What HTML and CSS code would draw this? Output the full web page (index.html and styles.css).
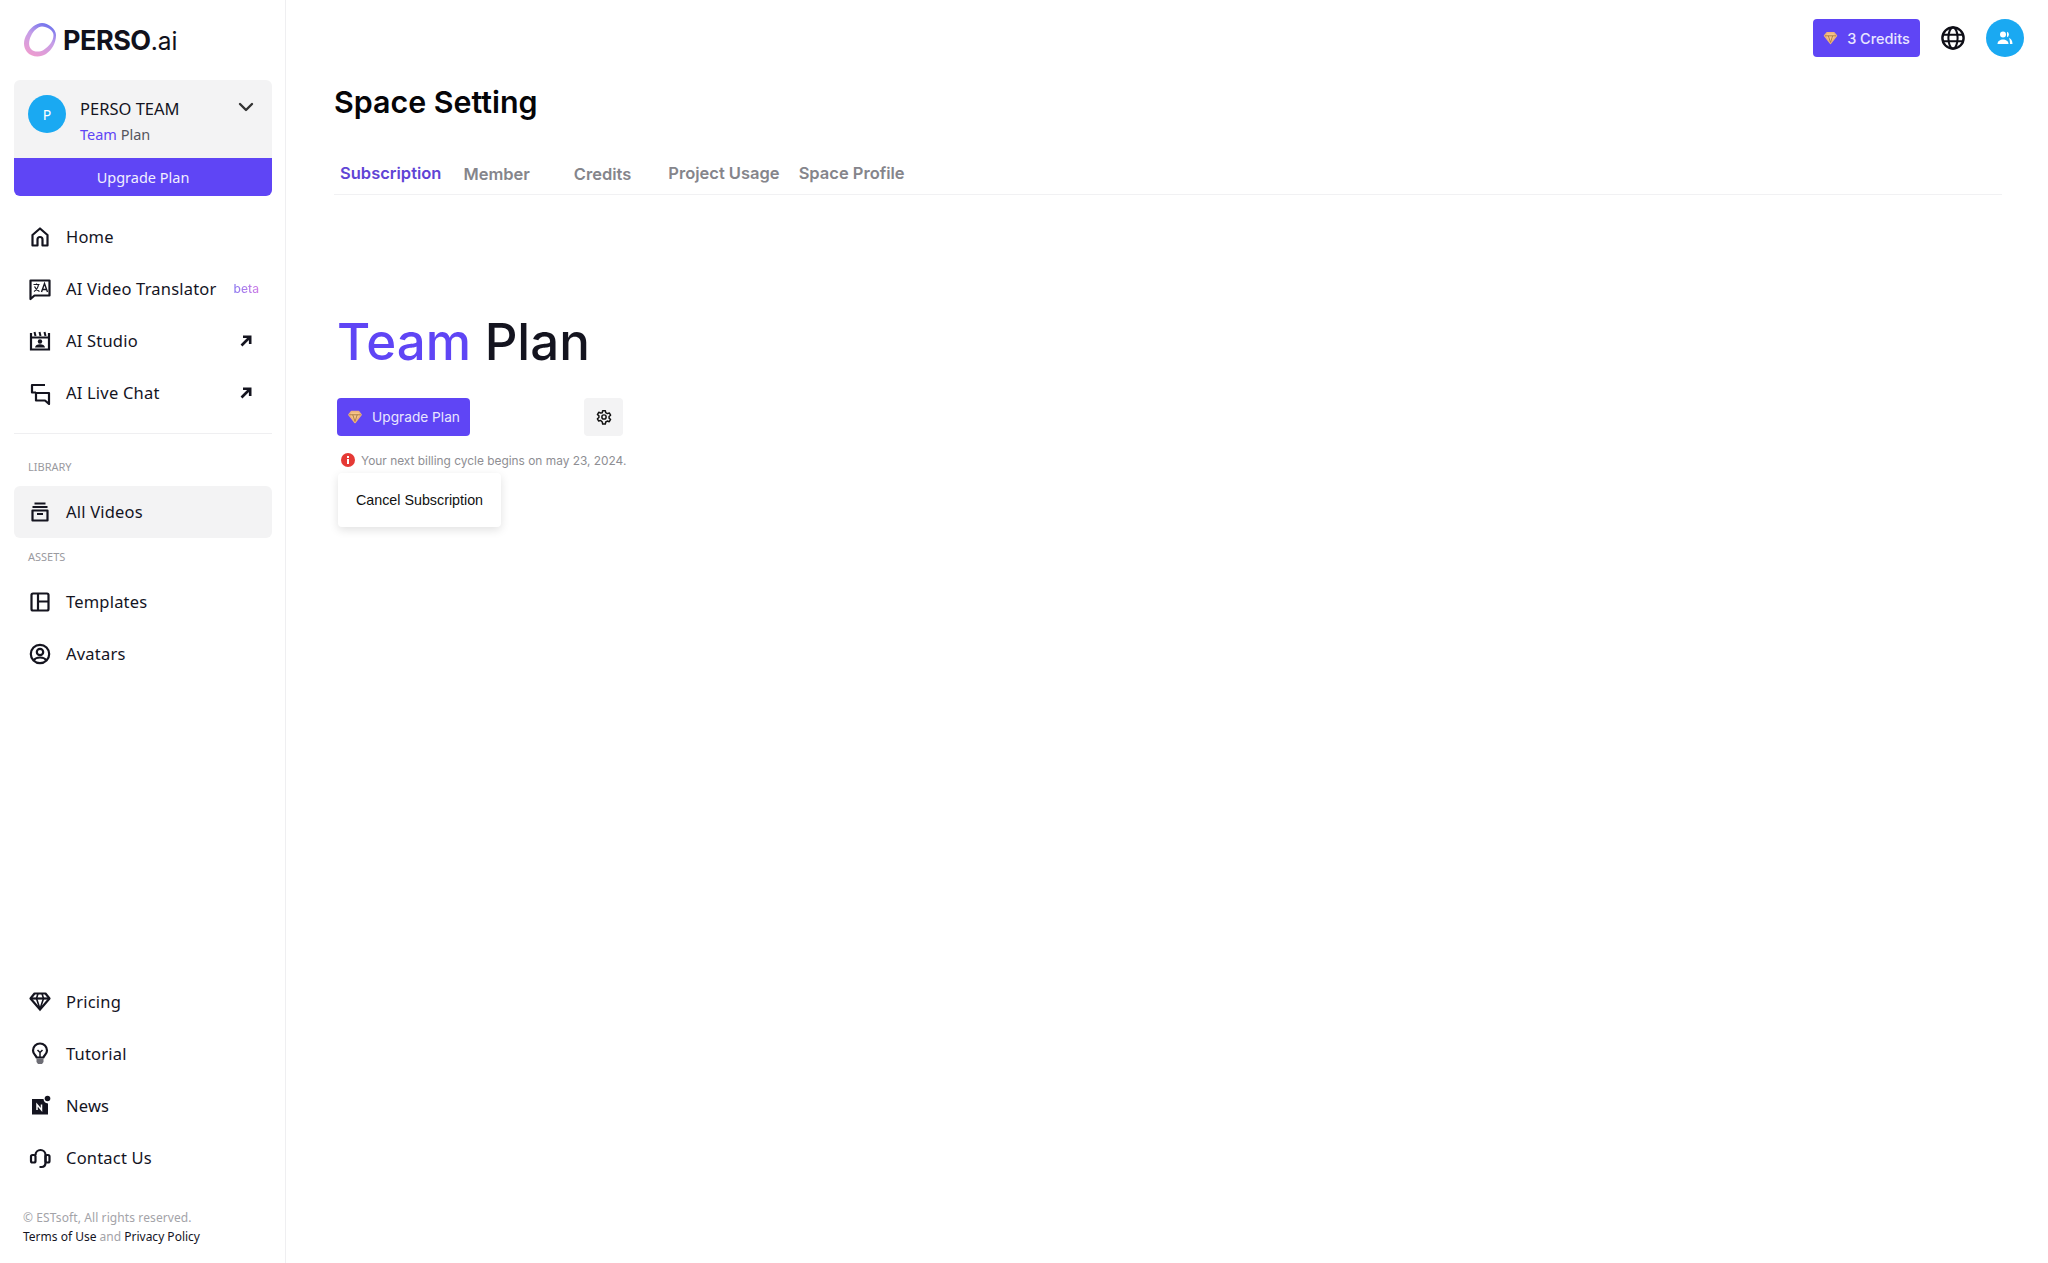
FILE: index.html
```html
<!DOCTYPE html>
<html lang="en">
<head>
    <meta charset="UTF-8">
    <title>Space Setting | PERSO.ai</title>
    <link rel="stylesheet" href="styles.css">
</head>
<body>
    <aside class="sidebar">
        <div class="brand">
            <svg class="brand-ring" width="34" height="36" viewBox="0 0 34 36">
                <defs>
                    <linearGradient id="ring" x1="0.75" y1="0" x2="0.3" y2="1">
                        <stop offset="0" stop-color="#6a70ee"/>
                        <stop offset="0.45" stop-color="#c59ee8"/>
                        <stop offset="1" stop-color="#ee9ccf"/>
                    </linearGradient>
                </defs>
                <path fill-rule="evenodd" fill="url(#ring)" d="M19 1C25 1 33 7 33 13C33 21 29 28 23 32C17 36 8 35 4 30C0 25 0 18 4 12C7 6 13 1 19 1ZM19 4.500C15 4.500 10 9 8 14C5.500 19 5.500 24 8 27C11 30.500 17 30 20.500 28C26 24.500 30.500 19 30.500 13C30.500 8.500 24 4.500 19 4.500Z"/>
            </svg>
            <span class="brand-name">PERSO<span class="brand-suffix">.ai</span></span>
        </div>

        <div class="team-card">
            <span class="team-avatar">P</span>
            <div class="team-info">
                <div class="team-name">PERSO TEAM</div>
                <div class="team-plan"><span class="accent">Team</span> Plan</div>
            </div>
            <svg class="team-chevron" width="16" height="10" viewBox="0 0 16 10"><path d="M2 2l6 6 6-6" fill="none" stroke="#333" stroke-width="2.400" stroke-linecap="round" stroke-linejoin="round"/></svg>
        </div>
        <button class="side-upgrade">Upgrade Plan</button>

        <nav class="nav-group nav-top">
            <a class="nav-item">
                <svg class="nav-icon" viewBox="0 0 24 24"><path d="M4.500 20.500V10L12 3.500 19.500 10v10.500h-5v-6a2.500 2.500 0 0 0-5 0v6z" fill="none" stroke="#14141f" stroke-width="2.200" stroke-linejoin="round"/></svg>
                Home
            </a>
            <a class="nav-item">
                <svg class="nav-icon" viewBox="0 0 24 24"><path d="M2.500 3.500h19v15H6.500l-4 3.500z" fill="none" stroke="#14141f" stroke-width="2.200" stroke-linejoin="round"/><path d="M5.500 7.500h6M8.500 6.500v1M6 14.500c2.500-1.500 4-4 4.500-7M6.500 9.500c1 2.500 3 4 5 5" fill="none" stroke="#14141f" stroke-width="1.200"/><path d="M13.500 15l3-8.500 3 8.500M14.500 12.500h4" fill="none" stroke="#14141f" stroke-width="1.400"/></svg>
                AI Video Translator
                <span class="beta">beta</span>
            </a>
            <a class="nav-item">
                <svg class="nav-icon" viewBox="0 0 24 24"><path d="M3 4v16.500h18V4" fill="none" stroke="#14141f" stroke-width="2.200" stroke-linejoin="miter"/><path d="M3 8.500h18" stroke="#14141f" stroke-width="2"/><path d="M6.500 3l1 4M11.500 3l1 4M16.500 3l1 4" stroke="#14141f" stroke-width="2"/><circle cx="12" cy="12.500" r="2.200" fill="#14141f"/><path d="M7 18.500c0-4.500 10-4.500 10 0z" fill="#14141f"/></svg>
                AI Studio
                <svg class="nav-arrow" width="12" height="12" viewBox="0 0 12 12"><path d="M1.500 10.500L9.500 2.500M3 1.800h7.200V9" fill="none" stroke="#14141f" stroke-width="2.600"/></svg>
            </a>
            <a class="nav-item">
                <svg class="nav-icon" viewBox="0 0 24 24"><path d="M17 4H4v7.500h4" fill="none" stroke="#14141f" stroke-width="2.200" stroke-linejoin="round"/><path d="M8 12h13v11l-4-3.500H8z" fill="none" stroke="#14141f" stroke-width="2.200" stroke-linejoin="round"/></svg>
                AI Live Chat
                <svg class="nav-arrow" width="12" height="12" viewBox="0 0 12 12"><path d="M1.500 10.500L9.500 2.500M3 1.800h7.200V9" fill="none" stroke="#14141f" stroke-width="2.600"/></svg>
            </a>
        </nav>

        <hr class="side-divider">

        <div class="side-label label-library">LIBRARY</div>
        <a class="nav-item nav-item-active">
            <svg class="nav-icon" viewBox="0 0 24 24"><path d="M6.500 3.500h11M4.500 7h15" stroke="#14141f" stroke-width="2.200"/><path d="M4.500 10.500h15v10h-15z" fill="none" stroke="#14141f" stroke-width="2.200" stroke-linejoin="round"/><path d="M9 14h6" stroke="#14141f" stroke-width="2"/></svg>
            All Videos
        </a>
        <div class="side-label">ASSETS</div>
        <nav class="nav-group nav-assets">
            <a class="nav-item">
                <svg class="nav-icon" viewBox="0 0 24 24"><rect x="3.500" y="3.500" width="17" height="17" rx="1.500" fill="none" stroke="#14141f" stroke-width="2.200"/><path d="M10 3.500v17M10 11.500h10.500" stroke="#14141f" stroke-width="2.200"/></svg>
                Templates
            </a>
            <a class="nav-item">
                <svg class="nav-icon" viewBox="0 0 24 24"><circle cx="12" cy="12" r="9.200" fill="none" stroke="#14141f" stroke-width="2.200"/><circle cx="12" cy="10" r="3.200" fill="none" stroke="#14141f" stroke-width="2.200"/><path d="M5.500 18.500c2.500-4 10.500-4 13 0" fill="none" stroke="#14141f" stroke-width="2.200"/></svg>
                Avatars
            </a>
        </nav>

        <nav class="nav-group nav-bottom">
            <a class="nav-item">
                <svg class="nav-icon" viewBox="0 0 24 24"><path d="M6.500 3.500h11l4 5L12 19.500 2.500 8.500z" fill="none" stroke="#14141f" stroke-width="2.200" stroke-linejoin="round"/><path d="M2.500 8.500h19" stroke="#14141f" stroke-width="2.200"/><path d="M8.500 8.500L12 19l3.500-10.500M8.500 8.500L10 3.500M15.500 8.500L14 3.500" fill="none" stroke="#14141f" stroke-width="1.600"/></svg>
                Pricing
            </a>
            <a class="nav-item">
                <svg class="nav-icon" viewBox="0 0 24 24"><path d="M8.500 15.500c0-2-3.500-3-3.500-7a7 7 0 0 1 14 0c0 4-3.500 5-3.500 7z" fill="none" stroke="#14141f" stroke-width="2.200" stroke-linejoin="round"/><path d="M9.500 8l2.500 2.500L14.500 8M12 10.500v5" fill="none" stroke="#14141f" stroke-width="1.500"/><path d="M8.500 16.500h7v3.500l-1.500 2h-4l-1.500-2z" fill="#6d6d75"/></svg>
                Tutorial
            </a>
            <a class="nav-item">
                <svg class="nav-icon" viewBox="0 0 24 24"><path d="M4 5h11.500a5 5 0 0 0 4.500 4.500V20.500H4z" fill="#14141f"/><circle cx="19.500" cy="4.500" r="2.800" fill="#14141f"/><path d="M9 16v-5.500l4.500 5.500v-5.500" fill="none" stroke="#fff" stroke-width="1.500"/></svg>
                News
            </a>
            <a class="nav-item">
                <svg class="nav-icon" viewBox="0 0 24 24"><path d="M7.500 9a5 5 0 0 1 10 0v7.500c0 2.500-1.500 4.500-4 4.500h-2" fill="none" stroke="#14141f" stroke-width="2.200"/><rect x="3" y="9" width="4.500" height="7.500" rx="1.500" fill="none" stroke="#14141f" stroke-width="2.200"/><rect x="17.500" y="9" width="4" height="7.500" rx="1.500" fill="none" stroke="#14141f" stroke-width="2.200"/></svg>
                Contact Us
            </a>
        </nav>

        <footer class="side-footer">
            <div class="footer-rights">© ESTsoft, All rights reserved.</div>
            <div><span class="footer-link">Terms of Use</span> and <span class="footer-link">Privacy Policy</span></div>
        </footer>
    </aside>

    <main class="content">
        <div class="topbar">
            <button class="credits-btn">
                <svg class="gem" width="15" height="14" viewBox="0 0 24 22"><path d="M6.500 2.500h11l4 5L12 19.500 2.500 7.500z" fill="#f6c58a" stroke="#eeb27a" stroke-width="2.500" stroke-linejoin="round"/><path d="M3 7.500h18M8.500 7.500L12 18l3.500-10.500" fill="none" stroke="#a8763f" stroke-width="1.400"/></svg>
                3 Credits
            </button>
            <svg class="globe" width="24" height="24" viewBox="0 0 26 26"><circle cx="13" cy="13" r="11.500" fill="none" stroke="#0e0e16" stroke-width="2.600"/><ellipse cx="13" cy="13" rx="5" ry="11.500" fill="none" stroke="#0e0e16" stroke-width="2.200"/><path d="M2 9.500h22M2 16.500h22" stroke="#0e0e16" stroke-width="2.200"/></svg>
            <span class="user-avatar">
                <svg width="16" height="14" viewBox="0 0 16 14"><circle cx="6" cy="3.500" r="3" fill="#fff"/><path d="M0.500 13c0-6 11-6 11 0z" fill="#fff"/><path d="M10 0.700a3 3 0 0 1 0 5.600zM12 7c2 .5 3.500 2.500 3.500 6h-2.500c0-2.500-.3-4.500-1-6z" fill="#fff"/></svg>
            </span>
        </div>

        <div class="page">
            <h1 class="page-title">Space Setting</h1>

            <div class="tabs">
                <span class="tab tab-active">Subscription</span>
                <span class="tab tab-member">Member</span>
                <span class="tab tab-credits">Credits</span>
                <span class="tab tab-usage">Project Usage</span>
                <span class="tab tab-profile">Space Profile</span>
            </div>

            <h2 class="plan-title"><span class="accent">Team</span> Plan</h2>

            <div class="plan-actions">
                <button class="upgrade-btn">
                    <svg class="gem" width="16" height="14" viewBox="0 0 24 22"><path d="M6.500 2.500h11l4 5L12 19.500 2.500 7.500z" fill="#f6c58a" stroke="#eeb27a" stroke-width="2.500" stroke-linejoin="round"/><path d="M3 7.500h18M8.500 7.500L12 18l3.500-10.500" fill="none" stroke="#a8763f" stroke-width="1.400"/></svg>
                    Upgrade Plan
                </button>
                <button class="gear-btn">
                    <svg width="16" height="16" viewBox="0 0 24 24"><path d="M10 2.500h4l.6 3 2.400 1.400 2.900-1 2 3.400-2.300 2v2.400l2.300 2-2 3.400-2.900-1-2.400 1.400-.6 3h-4l-.6-3L7 17.100l-2.900 1-2-3.400 2.300-2v-2.400l-2.300-2 2-3.400 2.900 1L9.400 5.500z" fill="none" stroke="#111" stroke-width="2.200" stroke-linejoin="round"/><circle cx="12" cy="12" r="3.200" fill="none" stroke="#111" stroke-width="2.200"/></svg>
                </button>
            </div>

            <div class="billing-note">
                <svg width="14" height="14" viewBox="0 0 14 14"><circle cx="7" cy="7" r="7" fill="#e53935"/><rect x="6" y="6" width="2" height="5" fill="#fff"/><rect x="6" y="3" width="2" height="2" fill="#fff"/></svg>
                Your next billing cycle begins on may 23, 2024.
            </div>

            <div class="cancel-menu">Cancel Subscription</div>
        </div>
    </main>
</body>
</html>
```

FILE: styles.css
```css
* {
    box-sizing: border-box;
}
body {
    margin: 0;
    height: 1263px;
    display: flex;
    overflow: hidden;
    background-color: #fff;
    font-family: Inter, "Liberation Sans", sans-serif;
    color: #14141f;
}
button {
    border: none;
    cursor: pointer;
    font-family: inherit;
}
.accent {
    color: #5f45f5;
}

/* sidebar */
.sidebar {
    width: 286px;
    height: 100%;
    flex-shrink: 0;
    display: flex;
    flex-direction: column;
    padding: 0 13px 0 14px;
    border-right: 1px solid #efeff1;
    font-family: "Noto Sans", sans-serif;
}
.brand {
    height: 80px;
    display: flex;
    align-items: center;
    gap: 6px;
    padding-left: 9px;
}
.brand-name {
    font-family: Inter, sans-serif;
    font-size: 27px;
    font-weight: 700;
    letter-spacing: -0.5px;
    color: #11111c;
}
.brand-suffix {
    font-weight: 400;
    font-size: 24.500px;
    letter-spacing: 0;
}
.team-card {
    height: 78px;
    display: flex;
    align-items: flex-start;
    padding: 15px 18px 0 14px;
    background-color: #f3f3f4;
    border-radius: 6px 6px 0 0;
}
.team-avatar {
    width: 38px;
    height: 38px;
    border-radius: 50%;
    background-color: #1aa9f2;
    color: #fff;
    font-size: 14px;
    display: flex;
    align-items: center;
    justify-content: center;
}
.team-info {
    flex: 1;
    margin: 1px 0 0 14px;
}
.team-name {
    font-size: 16.500px;
    line-height: 26px;
}
.team-plan {
    font-size: 14.500px;
    line-height: 25px;
    color: #55555c;
}
.team-chevron {
    margin-top: 7px;
}
.side-upgrade {
    height: 38px;
    border-radius: 0 0 6px 6px;
    background-color: #5f45f5;
    color: #f1efff;
    font-family: "Noto Sans", sans-serif;
    font-size: 14.500px;
}
.nav-group {
    display: flex;
    flex-direction: column;
}
.nav-top {
    margin-top: 15px;
}
.nav-item {
    height: 52px;
    display: flex;
    align-items: center;
    gap: 14px;
    padding: 0 13px 1px 14px;
    border-radius: 6px;
    font-size: 16.500px;
    letter-spacing: 0.2px;
    color: #14141f;
    cursor: pointer;
}
.nav-item-active {
    background-color: #f3f3f4;
}
.nav-icon {
    width: 24px;
    height: 24px;
    flex-shrink: 0;
    margin-top: 1px;
}
.nav-arrow {
    margin-left: auto;
    margin-right: 7px;
}
.beta {
    margin-left: auto;
    font-family: Inter, sans-serif;
    font-size: 12px;
    font-weight: 500;
    letter-spacing: 0;
    background: linear-gradient(90deg, #8f7bf0, #d080e6);
    -webkit-background-clip: text;
    background-clip: text;
    color: transparent;
}
.side-divider {
    width: 100%;
    margin: 14px 0 0;
    border: none;
    border-top: 1px solid #efeff1;
}
.side-label {
    height: 20px;
    margin: 9px 0;
    padding-left: 14px;
    font-size: 11px;
    line-height: 20px;
    color: #9a9aa0;
}
.label-library {
    margin-top: 23px;
}
.nav-bottom {
    margin-top: auto;
}
.side-footer {
    margin: 24px 0 17px 9px;
    font-size: 12px;
    line-height: 19px;
    color: #a3a3a8;
}
.footer-rights {
    letter-spacing: 0.1px;
}
.footer-link {
    color: #14141f;
}

/* main area */
.content {
    flex: 1;
    min-width: 0;
}
.topbar {
    display: flex;
    justify-content: flex-end;
    align-items: center;
    gap: 21px;
    padding: 19px 24px 0 0;
}
.credits-btn {
    width: 107px;
    height: 38px;
    display: flex;
    align-items: center;
    justify-content: center;
    gap: 9px;
    border-radius: 4px;
    background-color: #5f45f5;
    color: #e9e6ff;
    font-size: 14.500px;
    font-weight: 500;
}
.user-avatar {
    width: 38px;
    height: 38px;
    border-radius: 50%;
    background-color: #1aa9f2;
    display: flex;
    align-items: center;
    justify-content: center;
}
.page {
    padding: 0 46px 0 48px;
}
.page-title {
    margin: 26px 0 0;
    font-size: 30.400px;
    line-height: 38px;
    font-weight: 600;
    color: #050508;
}
.tabs {
    height: 43px;
    margin-top: 31px;
    display: flex;
    padding: 10px 0 0 6px;
    border-bottom: 1px solid #f1f1f3;
}
.tab {
    font-size: 16.500px;
    line-height: 22px;
    font-weight: 600;
    color: #85858b;
}
.tab-active {
    color: #5f45d5;
}
.tab-member {
    margin: 1px 0 0 22px;
}
.tab-credits {
    margin: 1px 0 0 44px;
}
.tab-usage {
    margin-left: 37px;
}
.tab-profile {
    margin-left: 19px;
}
.plan-title {
    margin: 113px 0 0 3px;
    font-size: 51px;
    line-height: 68px;
    font-weight: 500;
    color: #14141f;
}
.plan-actions {
    margin: 22px 0 0 3px;
    display: flex;
    gap: 114px;
}
.upgrade-btn {
    width: 133px;
    height: 38px;
    display: flex;
    align-items: center;
    justify-content: center;
    gap: 9px;
    border-radius: 4px;
    background-color: #5f45f5;
    color: #e9e6ff;
    font-size: 13.700px;
}
.gear-btn {
    width: 39px;
    height: 38px;
    display: flex;
    align-items: center;
    justify-content: center;
    border-radius: 4px;
    background-color: #f3f3f4;
}
.billing-note {
    margin: 14px 0 0 7px;
    height: 20px;
    display: flex;
    align-items: center;
    gap: 6px;
    font-size: 11.900px;
    color: #8e8e93;
}
.cancel-menu {
    width: 163px;
    height: 54px;
    margin: 3px 0 0 4px;
    display: flex;
    align-items: center;
    justify-content: center;
    border-radius: 4px;
    background-color: #fff;
    box-shadow: 0 3px 10px rgba(0, 0, 0, 0.12);
    font-family: "Liberation Sans", sans-serif;
    font-size: 14.300px;
    color: #111;
}
```
